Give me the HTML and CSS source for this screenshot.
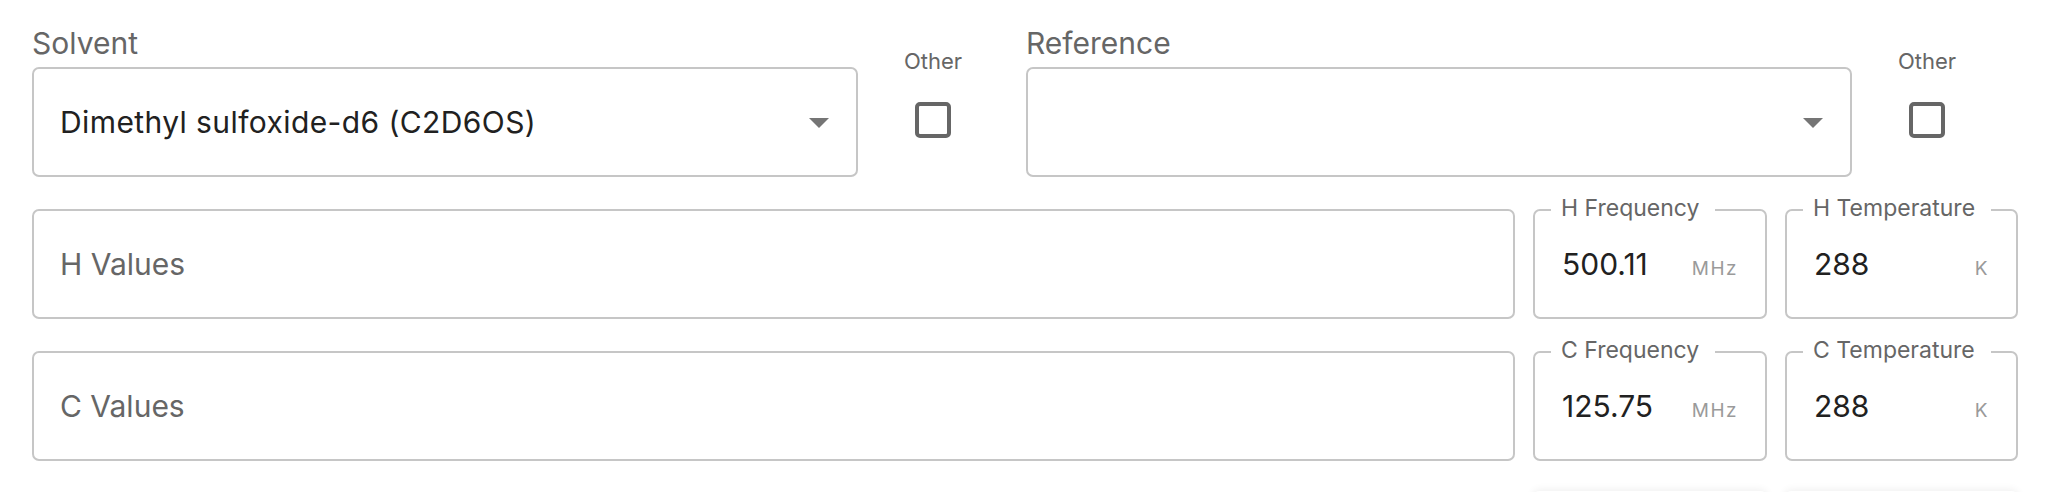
FILE: index.html
```html
<!DOCTYPE html>
<html lang="en">
<head>
<meta charset="utf-8">
<title>NMR form</title>
<link rel="stylesheet" href="styles.css">
</head>
<body>
<div class="form">
  <div class="row-top">
    <div class="pair">
      <div class="select-group">
        <div class="top-label">Solvent</div>
        <div class="box select">
          <span class="select-value">Dimethyl sulfoxide-d6 (C2D6OS)</span>
          <span class="arrow"></span>
        </div>
      </div>
      <div class="other">
        <div class="other-label">Other</div>
        <svg class="check" width="36" height="36" viewBox="0 0 36 36"><rect x="2" y="2" width="32" height="32" rx="3" ry="3" fill="none" stroke="#666" stroke-width="4"/></svg>
      </div>
    </div>
    <div class="pair">
      <div class="select-group">
        <div class="top-label">Reference</div>
        <div class="box select">
          <span class="select-value"></span>
          <span class="arrow"></span>
        </div>
      </div>
      <div class="other">
        <div class="other-label">Other</div>
        <svg class="check" width="36" height="36" viewBox="0 0 36 36"><rect x="2" y="2" width="32" height="32" rx="3" ry="3" fill="none" stroke="#666" stroke-width="4"/></svg>
      </div>
    </div>
  </div>

  <div class="row">
    <div class="box values"><span class="placeholder">H Values</span></div>
    <div class="box num freq">
      <span class="float-label">H Frequency</span>
      <span class="num-value">500.11</span>
      <span class="unit">MHz</span>
    </div>
    <div class="box num temp">
      <span class="float-label">H Temperature</span>
      <span class="num-value">288</span>
      <span class="unit">K</span>
    </div>
  </div>

  <div class="row">
    <div class="box values"><span class="placeholder">C Values</span></div>
    <div class="box num freq">
      <span class="float-label">C Frequency</span>
      <span class="num-value">125.75</span>
      <span class="unit">MHz</span>
    </div>
    <div class="box num temp">
      <span class="float-label">C Temperature</span>
      <span class="num-value">288</span>
      <span class="unit">K</span>
    </div>
  </div>

  <div class="row buttons">
    <div class="spacer"></div>
    <div class="btn freq"></div>
    <div class="btn temp"></div>
  </div>
</div>
</body>
</html>
```

FILE: styles.css
```css
html, body {
  margin: 0;
  padding: 0;
  background: #ffffff;
}
body {
  font-family: Inter, "Liberation Sans", sans-serif;
  overflow: hidden;
}
.form {
  padding: 26px 28px 0 32px;
  display: flex;
  flex-direction: column;
  gap: 32px;
}
.row-top {
  display: grid;
  grid-template-columns: 976px 976px;
  column-gap: 18px;
}
.pair {
  display: flex;
}
.select-group {
  width: 826px;
  display: flex;
  flex-direction: column;
}
.top-label {
  font-size: 30px;
  line-height: 35px;
  color: #666666;
  margin-bottom: 6px;
}
.box {
  box-sizing: border-box;
  height: 110px;
  border: 2px solid #c6c6c6;
  border-radius: 7px;
  position: relative;
  display: flex;
  align-items: center;
}
.select {
  padding: 0 27px 0 26px;
  justify-content: space-between;
}
.select-value {
  font-size: 30px;
  letter-spacing: 0.4px;
  color: #212121;
}
.arrow {
  width: 0;
  height: 0;
  border-left: 10px solid transparent;
  border-right: 10px solid transparent;
  border-top: 10px solid #757575;
  margin-top: 1px;
}
.other {
  width: 150px;
  display: flex;
  flex-direction: column;
  align-items: center;
  padding-top: 23px;
}
.other-label {
  font-size: 22px;
  line-height: 25px;
  color: #666666;
  margin-bottom: 28px;
}
.check {
  display: block;
}
.row {
  display: flex;
  gap: 18px;
}
.values {
  flex: 1;
  padding-left: 26px;
}
.placeholder {
  font-size: 30px;
  color: #666666;
}
.freq {
  width: 234px;
  flex: none;
}
.temp {
  width: 233px;
  flex: none;
}
.num {
  padding: 0 27px 0 27px;
  justify-content: space-between;
}
.float-label {
  position: absolute;
  top: -16px;
  left: 16px;
  padding: 0 16px 0 10px;
  background: #ffffff;
  font-size: 23px;
  line-height: 26px;
  color: #666666;
  white-space: nowrap;
}
.num-value {
  font-size: 30px;
  color: #212121;
}
.unit {
  font-size: 19px;
  letter-spacing: 1.5px;
  color: #9a9a9a;
  margin-top: 8px;
}
.buttons {
  margin-top: -2px;
}
.spacer {
  flex: 1;
}
.btn {
  height: 60px;
  border-radius: 6px;
  background: #ffffff;
  box-shadow: 0 -1px 8px rgba(0, 0, 0, 0.07);
}
```
